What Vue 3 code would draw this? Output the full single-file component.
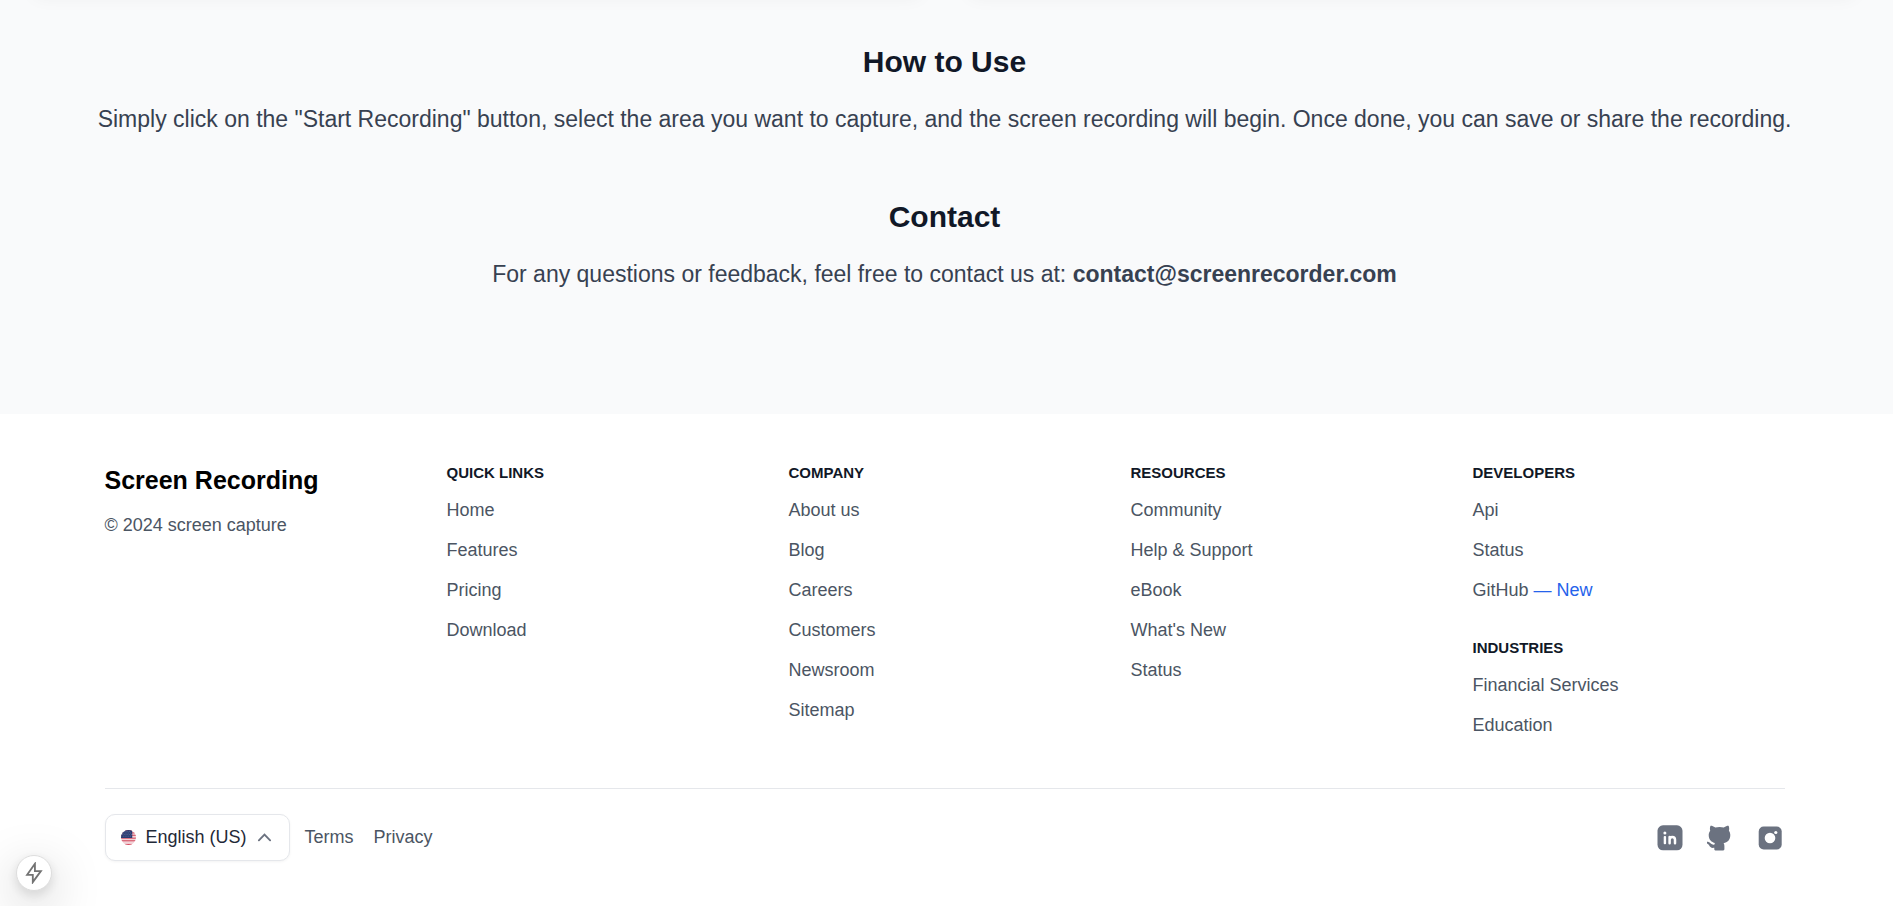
<script setup>
const columns = [
  [{ title: 'Quick Links', links: ['Home', 'Features', 'Pricing', 'Download'] }],
  [{ title: 'Company', links: ['About us', 'Blog', 'Careers', 'Customers', 'Newsroom', 'Sitemap'] }],
  [{ title: 'Resources', links: ['Community', 'Help & Support', 'eBook', "What's New", 'Status'] }],
  [
    { title: 'Developers', links: ['Api', 'Status', 'GitHub'] },
    { title: 'Industries', links: ['Financial Services', 'Education'] },
  ],
]
</script>

<template>
  <div class="page">
    <main class="main">
      <div class="cards" aria-hidden="true">
        <div class="card"></div>
        <div class="card"></div>
      </div>
      <section class="info">
        <h2>How to Use</h2>
        <p>Simply click on the "Start Recording" button, select the area you want to capture, and the screen recording will begin. Once done, you can save or share the recording.</p>
      </section>
      <section class="info">
        <h2>Contact</h2>
        <p>For any questions or feedback, feel free to contact us at: <strong>contact@screenrecorder.com</strong></p>
      </section>
    </main>

    <div class="footer-wrap">
      <footer class="footer">
        <div class="grid">
          <div>
            <a class="brand" href="#">Screen Recording</a>
            <p class="copy">© 2024 screen capture</p>
          </div>
          <div v-for="(groups, i) in columns" :key="i" class="column">
            <nav v-for="group in groups" :key="group.title" :aria-label="group.title">
              <h4>{{ group.title }}</h4>
              <ul>
                <li v-for="link in group.links" :key="link">
                  <a href="#">{{ link }}</a><span v-if="link === 'GitHub'" class="new"> — New</span>
                </li>
              </ul>
            </nav>
          </div>
        </div>

        <div class="bottom">
          <div class="left">
            <button class="language" type="button">
              <svg class="flag" viewBox="0 0 16 16" aria-hidden="true">
                <defs><clipPath id="flag-clip"><circle cx="8" cy="8" r="8" /></clipPath></defs>
                <g clip-path="url(#flag-clip)">
                  <path fill="#f3d3d8" d="M0 0h16v16H0z" />
                  <path stroke="#cf3a50" stroke-width="1" d="M0 .6h16M0 3.100h16M0 5.600h16M0 8.700h16M0 11.500h16M0 15.400h16" />
                  <path fill="#2b3b72" d="M0 0h12v8.500H0z" />
                  <path stroke="#8f9abb" stroke-width=".7" stroke-dasharray=".7 1.3" d="M1 1.500h10M2 3.200h10M1 4.900h11M2 6.600h10" />
                </g>
              </svg>
              <span>English (US)</span>
              <svg class="chevron" viewBox="0 0 16 16" aria-hidden="true"><path d="M2 11l6-6 6 6" /></svg>
            </button>
            <a href="#">Terms</a>
            <a href="#">Privacy</a>
          </div>
          <div class="social">
            <a href="#" aria-label="LinkedIn">
              <svg viewBox="0 0 28 28">
                <rect x="0.500" y="1.300" width="25" height="25" rx="5.500" />
                <g fill="#fff"><circle cx="7.900" cy="9" r="1.500" /><rect x="6.700" y="12" width="2.400" height="8.300" rx="1" /></g>
                <path fill="none" stroke="#fff" stroke-width="2.500" stroke-linecap="round" d="M12.600 12.900v6.300M12.600 15.800c0-3.800 5.400-3.800 5.400 0v3.400" />
              </svg>
            </a>
            <a href="#" aria-label="GitHub">
              <svg viewBox="0 0 28 28">
                <path d="M3.300 2.200c.4-.8 2-.6 5 1.300a17 17 0 0 1 8.500 0c3-1.900 4.600-2.100 5-1.300.5 1.600.5 3.200.1 4.600 1 1.300 1.400 2.700 1.400 4.300 0 5-2.800 7.300-6.700 8.100.6.800.8 1.700.8 2.800v3c0 .8-.4 1.400-1.200 1.400H8.400c-.8 0-1.100-.6-1.100-1.400v-1.200c-3 .6-4.400-.8-5.200-2.500-.5-.9-1-1.300-2-1.900-1.200-.8-.4-2 .9-1.600 2.800.8 3 3.300 6.300 2.900.1-.7.300-1.200.7-1.600C4.700 18.300 1.700 16 1.700 11.100c0-1.600.6-3 1.500-4.300-.4-1.400-.4-3 .1-4.600z" />
              </svg>
            </a>
            <a href="#" aria-label="Instagram">
              <svg viewBox="0 0 28 28">
                <rect x="1.700" y="2.500" width="23" height="23" rx="5" />
                <circle cx="13" cy="14" r="5.300" fill="#fff" /><circle cx="18.800" cy="8.500" r="1.600" fill="#fff" />
              </svg>
            </a>
          </div>
        </div>
      </footer>
    </div>

    <button class="bolt" type="button" aria-label="Static route">
      <svg viewBox="0 0 24 24" aria-hidden="true"><path d="M13 2 4.500 14h6.200v8L19.500 10h-6.500z" /></svg>
    </button>
  </div>
</template>

<style>
body { margin: 0; background: #fff; }
</style>

<style scoped>
.page { font-family: Arial, "Liberation Sans", sans-serif; color: #111827; }
h2, h4, p, ul { margin: 0; padding: 0; }
a { color: inherit; text-decoration: none; }
button { font: inherit; cursor: pointer; }
.main { background: #f9fafb; padding: 0 4px 62px 0; overflow: hidden; }
.cards { display: grid; grid-template-columns: 1fr 1fr; gap: 40px; padding: 0 30px; margin-bottom: 42px; }
.card { height: 30px; margin-top: -42px; border-radius: 10px; background: #fff; box-shadow: 0 12px 19px -4px rgba(0, 0, 0, .06), 0 5px 8px -5px rgba(0, 0, 0, .06); }
.info { text-align: center; margin-bottom: 60px; }
h2 { font-size: 30px; line-height: 40px; font-weight: 700; margin-bottom: 20px; }
.info p { font-size: 23px; line-height: 35px; color: #374151; }
.footer-wrap { padding-right: 4px; }
.footer { max-width: 1680px; margin: 0 auto; padding: 49px 0 40px; font-size: 18px; line-height: 25px; color: #4b5563; }
.grid { display: grid; grid-template-columns: repeat(5, 1fr); gap: 30px; padding-bottom: 50px; border-bottom: 1px solid #e5e7eb; }
.brand { display: block; font-size: 25px; line-height: 35px; font-weight: 700; color: #000; }
.copy { margin-top: 15px; }
.column { display: flex; flex-direction: column; gap: 35px; }
h4 { font-size: 15px; line-height: 20px; font-weight: 700; text-transform: uppercase; color: #111827; margin-bottom: 15px; }
ul { list-style: none; display: grid; gap: 15px; }
.new { color: #2563eb; white-space: pre; }
.bottom { display: flex; align-items: center; justify-content: space-between; padding-top: 25px; }
.left { display: flex; align-items: center; gap: 20px; }
.language { display: flex; align-items: center; gap: 10px; padding: 10px 17px 10px 15px; margin-right: -5px; border: 1px solid #e5e7eb; border-radius: 10px; background: #fff; color: #1f2937; box-shadow: 0 1px 3px rgba(0, 0, 0, .05); }
.flag { width: 15px; height: 15px; }
.chevron { width: 15px; height: 15px; fill: none; stroke: #6b7280; stroke-width: 2; stroke-linecap: round; }
.social { display: flex; gap: 22px; }
.social svg { display: block; width: 28px; height: 28px; fill: #6b7280; }
.bolt { position: fixed; left: 16px; bottom: 15px; width: 36px; height: 36px; display: grid; place-items: center; padding: 0; border: 1px solid #ddd; border-radius: 50%; background: #fff; box-shadow: 0 14px 50px rgba(0, 0, 0, .25), 0 4px 12px rgba(0, 0, 0, .12); }
.bolt svg { width: 22px; height: 22px; fill: none; stroke: #737373; stroke-width: 2; }
</style>
